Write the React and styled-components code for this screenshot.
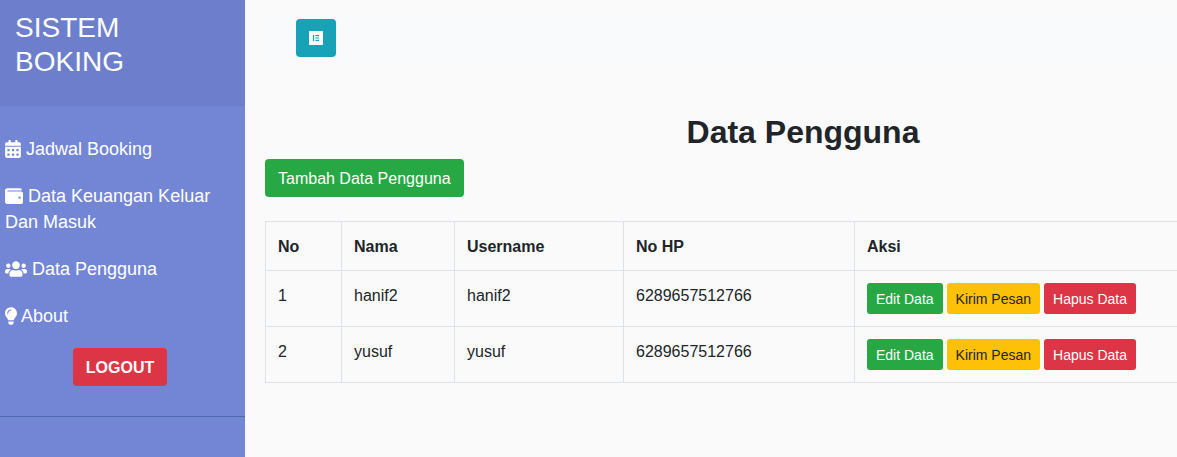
import React from "react";
import styled, { createGlobalStyle, css } from "styled-components";
import { FaCalendarAlt, FaWallet, FaUsers, FaLightbulb, FaElementor } from "react-icons/fa";

const GlobalStyle = createGlobalStyle`
  *, *::before, *::after { box-sizing: border-box; }
  body {
    margin: 0;
    background: #fafafa;
    color: #212529;
    font-family: "Liberation Sans", Arial, sans-serif;
    font-size: 16px;
    line-height: 24px;
  }
`;

const Wrapper = styled.div`
  display: flex;
  align-items: stretch;
  min-height: 100vh;
`;

const Sidebar = styled.nav`
  flex: 0 0 245px;
  background: #7386d5;
  color: #fff;
`;

const SidebarHeader = styled.header`
  padding: 11px 15px 27px;
  background: #6d7fcc;
`;

const Brand = styled.h3`
  margin: 0;
  width: min-content;
  font-size: 28px;
  font-weight: 400;
  line-height: 34px;
`;

const Menu = styled.ul`
  display: flex;
  flex-direction: column;
  gap: 1px;
  margin: 0;
  padding: 20px 0 30px;
  list-style: none;
  border-bottom: 1px solid #4f6aa8;
`;

const MenuLink = styled.a`
  display: block;
  padding: 10px 5px;
  color: #fff;
  font-size: 18px;
  line-height: 26px;
  text-decoration: none;

  svg {
    width: ${(p) => p.$iconWidth};
    height: 18px;
    vertical-align: -3px;
  }
`;

const LogoutItem = styled.li`
  display: flex;
  justify-content: center;
  padding: 8px 5px 0 0;
`;

const tones = {
  success: css`background: #28a745; color: #fff;`,
  warning: css`background: #ffc107; color: #212529;`,
  danger: css`background: #dc3545; color: #fff;`,
  info: css`background: #17a2b8; color: #fff;`,
};

const Button = styled.button`
  display: inline-flex;
  align-items: center;
  justify-content: center;
  padding: ${(p) => (p.$small ? "6px 9px 4px" : "8px 13px 6px")};
  border: 0;
  border-radius: ${(p) => (p.$small ? "3px" : "4px")};
  font-family: inherit;
  font-size: ${(p) => (p.$small ? "14px" : "16px")};
  font-weight: ${(p) => (p.$bold ? 700 : 400)};
  line-height: ${(p) => (p.$small ? "21px" : "24px")};
  white-space: nowrap;
  cursor: pointer;
  ${(p) => tones[p.$tone]}
`;

const ToggleButton = styled(Button)`
  height: 38px;
  padding: 7px 13px;

  svg {
    width: 14px;
    height: 16px;
  }
`;

const Main = styled.main`
  flex: 1;
  min-width: 0;
  padding: 13px 0 20px 20px;
  overflow: hidden;
`;

const Content = styled.div`
  min-width: 1076px;
`;

const Topbar = styled.div`
  display: flex;
  margin-bottom: 50px;
  padding: 6px 31px;
  background: #f8fafc;
`;

const Title = styled.h2`
  margin: 0 0 8px;
  font-size: 32px;
  line-height: 38px;
  text-align: center;
`;

const Table = styled.table`
  width: 100%;
  margin-top: 24px;
  border-collapse: collapse;
  table-layout: fixed;
`;

const Column = styled.col`
  width: ${(p) => p.$width};
`;

const cell = css`
  padding: 13px 12px 11px;
  border: 1px solid #dee2e6;
  text-align: left;
  vertical-align: top;
`;

const HeadCell = styled.th`${cell}`;
const Cell = styled.td`${cell}`;

const ActionCell = styled(Cell)`
  padding: 12px;
`;

const Actions = styled.div`
  display: flex;
  gap: 4px;
`;

const menu = [
  { icon: FaCalendarAlt, iconWidth: "16px", label: "Jadwal Booking" },
  { icon: FaWallet, iconWidth: "18px", label: "Data Keuangan Keluar Dan Masuk" },
  { icon: FaUsers, iconWidth: "22px", label: "Data Pengguna" },
  { icon: FaLightbulb, iconWidth: "12px", label: "About" },
];

const columns = [
  { label: "No", width: "76px" },
  { label: "Nama", width: "113px" },
  { label: "Username", width: "169px" },
  { label: "No HP", width: "231px" },
  { label: "Aksi", width: "auto" },
];

const users = [
  { name: "hanif2", username: "hanif2", phone: "6289657512766" },
  { name: "yusuf", username: "yusuf", phone: "6289657512766" },
];

export default function App() {
  return (
    <>
      <GlobalStyle />
      <Wrapper>
        <Sidebar>
          <SidebarHeader>
            <Brand>SISTEM BOKING</Brand>
          </SidebarHeader>
          <Menu>
            {menu.map(({ icon: Icon, iconWidth, label }) => (
              <li key={label}>
                <MenuLink href="#" $iconWidth={iconWidth}>
                  <Icon aria-hidden="true" /> {label}
                </MenuLink>
              </li>
            ))}
            <LogoutItem>
              <Button type="button" $tone="danger" $bold>LOGOUT</Button>
            </LogoutItem>
          </Menu>
        </Sidebar>
        <Main>
          <Content>
            <Topbar>
              <ToggleButton type="button" $tone="info" aria-label="Menu">
                <FaElementor aria-hidden="true" />
              </ToggleButton>
            </Topbar>
            <Title>Data Pengguna</Title>
            <Button type="button" $tone="success">Tambah Data Pengguna</Button>
            <Table>
              <colgroup>
                {columns.map((c) => <Column key={c.label} $width={c.width} />)}
              </colgroup>
              <thead>
                <tr>
                  {columns.map((c) => <HeadCell key={c.label} scope="col">{c.label}</HeadCell>)}
                </tr>
              </thead>
              <tbody>
                {users.map((u, i) => (
                  <tr key={u.username}>
                    <Cell>{i + 1}</Cell>
                    <Cell>{u.name}</Cell>
                    <Cell>{u.username}</Cell>
                    <Cell>{u.phone}</Cell>
                    <ActionCell>
                      <Actions>
                        <Button type="button" $small $tone="success">Edit Data</Button>
                        <Button type="button" $small $tone="warning">Kirim Pesan</Button>
                        <Button type="button" $small $tone="danger">Hapus Data</Button>
                      </Actions>
                    </ActionCell>
                  </tr>
                ))}
              </tbody>
            </Table>
          </Content>
        </Main>
      </Wrapper>
    </>
  );
}
